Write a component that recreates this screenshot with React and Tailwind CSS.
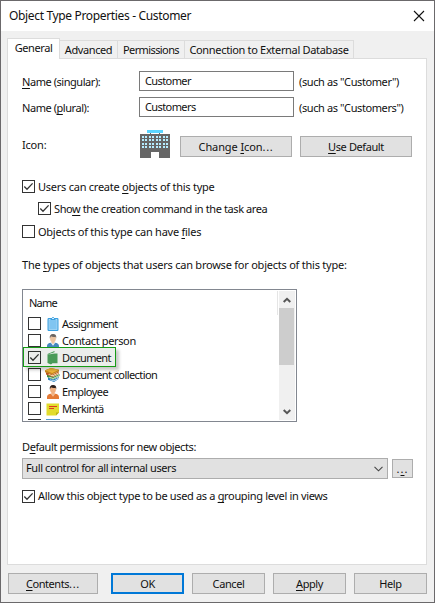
import React from 'react';

const U = ({ children }) => (
  <span className="underline decoration-1 underline-offset-[2px] [text-decoration-skip-ink:none]">{children}</span>
);

const Dots = () => <span className="tracking-[0.7px]">...</span>;

const Box = ({ checked }) => (
  <svg width="13" height="13" viewBox="0 0 13 13" className="block shrink-0">
    <rect x="0.5" y="0.5" width="12" height="12" fill="#fff" stroke="#333" />
    {checked && <path d="M2.3 6.5 5 9.2 10.6 3.4" fill="none" stroke="#333" strokeWidth="1.3" />}
  </svg>
);

const Check = ({ checked, className, text, children }) => (
  <label className={`flex h-[13px] items-center gap-[3px] ${className}`}>
    <Box checked={checked} />
    <span className={`leading-[14px] ${text}`}>{children}</span>
  </label>
);

const Btn = ({ className, border = 'border border-[#adadad]', children }) => (
  <button className={`flex h-[21px] shrink-0 items-center justify-center bg-[#e1e1e1] leading-[19px] ${border} ${className}`}>
    <span>{children}</span>
  </button>
);

const BuildingIcon = () => (
  <svg width="30" height="28" viewBox="0 0 30 28" shapeRendering="crispEdges" className="block shrink-0">
    <rect x="7" width="16" height="3" fill="#5bd5ff" />
    <path d="M10 3h1v1h-1zM19 3h1v1h-1zM0 4h30v24H19v-6h-8v6H0z" fill="#666" />
    {[6, 9, 13, 16].map((y) =>
      [2, 5, 9, 12, 16, 19, 23, 26].map((x) => (
        <rect key={`${x}-${y}`} x={x} y={y} width="2" height="2" fill="#b5ecff" />
      ))
    )}
  </svg>
);

const Clipboard = () => (
  <svg width="14" height="14" viewBox="0 0 14 14" className="block">
    <rect x="2.1" y="1.6" width="9.8" height="11.800" rx="0.6" fill="#d8effc" stroke="#3a9fe0" strokeWidth="1.2" />
    <rect x="3.2" y="3" width="7.6" height="9.400" fill="#80c5f1" />
    <path d="M4.5 3V1.2h1.4C6 .4 6.4 0 7 0s1 .4 1.1 1.2h1.4V3z" fill="#3a9fe0" />
    <rect x="6" y="1" width="2" height="1" fill="#d8effc" />
  </svg>
);

const Person = ({ hair, skin, shirt, collar }) => (
  <svg width="14" height="14" viewBox="0 0 14 14" className="block">
    <path d="M1 14v-2c0-2 1.500-3 4-3.300h4c2.500.3 4 1.300 4 3.300v2z" fill={shirt} />
    <path d="M4.600 8.600 7 11.800l2.400-3.200z" fill={collar} />
    <path d="M5.500 6h3v2.700L7 10 5.500 8.700z" fill={skin} />
    <ellipse cx="7" cy="4.400" rx="2.900" ry="3.500" fill={skin} />
    <path d="M3.800 4.500C3.400 1.500 4.500 0 7 0s3.700 1.300 3.200 4.500L9.500 2.800C8 3.200 6 3 5 2.300z" fill={hair} />
  </svg>
);

const Book = () => (
  <svg width="14" height="14" viewBox="0 0 14 14" className="block">
    <path d="M1.500 3 8.500 0v1.700L3 3.300z" fill="#50a55f" />
    <path d="M2.600 3.300 9 1v1.500z" fill="#f1f8f2" />
    <path d="M1.500 3.300H4L9 2.400h2.500v9.900H6.500L5 13.500 1.500 12z" fill="#50a55f" />
  </svg>
);

const Books = () => (
  <svg width="15" height="14" viewBox="0 0 15 14" className="-ml-px block">
    <path d="M3 9.500v2.300L9 14l5-3.200V9l-6 2.500z" fill="#287fc1" />
    <path d="m5 11.500 4 1 5-3v1L9 13.300 5 12z" fill="#e5f1f5" />
    <path d="M2 6.500v2.600l6 2.400L14.500 8V6L8 9z" fill="#3e8b3e" />
    <path d="m4 8.800 4.200 1.200 6-3v.7L8.200 10.900 4 9.500z" fill="#dcefd0" />
    <path d="M1 4v2.500L7.500 9 14 5.500V3.300L7.500 6.500z" fill="#b8501c" />
    <path d="m3.500 6 4.200 1.300L14 4.200v.7L7.700 8.300 3.500 6.800z" fill="#fff2be" />
    <path d="m0 2.200 6-2.200 8 1.700v1.600L7 6.500 0 4.300z" fill="#c8861c" />
    <path d="m0 2.200 6-2.200 8 1.700L7.200 4.900z" fill="#f3b93a" />
  </svg>
);

const Note = () => (
  <svg width="14" height="14" viewBox="0 0 14 14" className="block">
    <path d="M.5 1.500h12.500V10.500L10 13.500H.5z" fill="#e2dc2d" />
    <path d="M13 10.500h-3v3z" fill="#b8b018" />
    <path d="M3 4.500h8M3 6.500h5" stroke="#df3a20" strokeWidth="1" />
  </svg>
);

const BlueItem = () => (
  <svg width="14" height="14" viewBox="0 0 14 14" className="block">
    <rect x="0" y="0" width="14" height="13" fill="#4f9bd0" />
  </svg>
);

const rows = [
  { name: 'Assignment', icon: <Clipboard />, t: 'tracking-[-0.55px]' },
  { name: 'Contact person', icon: <Person hair="#6b6460" skin="#ecc3a0" shirt="#4587bd" collar="#e9f3fa" />, t: 'tracking-[-0.36px]' },
  { name: 'Document', icon: <Book />, checked: true, t: 'tracking-[-0.65px]' },
  { name: 'Document collection', icon: <Books />, t: 'tracking-[-0.58px]' },
  { name: 'Employee', icon: <Person hair="#2e211d" skin="#f0b080" shirt="#e47a35" collar="#f5c199" />, t: 'tracking-[-0.55px]' },
  { name: 'Merkintä', icon: <Note />, t: 'tracking-[-0.6px]' },
  { name: '', icon: <BlueItem />, t: '' },
];

const Chevron = ({ down }) => (
  <svg width="8" height="6" viewBox="0 0 8 6" className="block">
    <path d={down ? 'M.7 1 4 4.200 7.300 1' : 'M.7 5 4 1.800 7.300 5'} fill="none" stroke="#555" strokeWidth="2" />
  </svg>
);

export default function App() {
  return (
    <div className="flex h-[603px] w-[435px] flex-col overflow-hidden border border-[#6b696b] bg-[#f0f0f0] font-['Noto_Sans',sans-serif] text-[11px] tracking-[-0.4px] whitespace-nowrap text-[#111]">
      <header className="flex h-[30px] shrink-0 items-center justify-between bg-white pr-[9px] pl-[8px]">
        <h1 className="text-[12px] leading-[30px] tracking-[-0.34px]">Object Type Properties - Customer</h1>
        <svg width="12" height="12" viewBox="0 0 12 12">
          <path d="m1 1 10 10M11 1 1 11" stroke="#111" strokeWidth="1.100" />
        </svg>
      </header>

      <nav className="mt-[7px] ml-[6px] flex h-[20px] shrink-0 items-end leading-[18px]">
        <div className="z-10 -mb-px flex h-[21px] w-[53px] shrink-0 justify-center border border-b-0 border-[#dcdcdc] bg-white">General</div>
        <div className="flex h-[18px] w-[58px] shrink-0 justify-center border-t border-r border-[#dcdcdc]">Advanced</div>
        <div className="flex h-[18px] w-[67px] shrink-0 justify-center border-t border-r border-[#dcdcdc] tracking-[-0.6px]">Permissions</div>
        <div className="flex h-[18px] w-[169px] shrink-0 justify-center border-t border-r border-[#dcdcdc] tracking-[-0.33px]">Connection to External Database</div>
      </nav>

      <main className="ml-[6px] flex h-[507px] w-[420px] shrink-0 flex-col border border-[#dcdcdc] bg-white pt-[12px] pl-[14px]">
        <div className="flex h-[20px] shrink-0">
          <span className="w-[117px] leading-[22px] tracking-[-0.45px]"><U>N</U>ame (singular):</span>
          <div className="w-[155px] border border-[#7a7a7a] pl-[5px] leading-[18px] tracking-[-0.6px]">Customer</div>
          <span className="ml-[5px] leading-[22px]">(such as "Customer")</span>
        </div>
        <div className="mt-[6px] flex h-[20px] shrink-0">
          <span className="w-[117px] leading-[22px] tracking-[-0.45px]">Name (<U>p</U>lural):</span>
          <div className="w-[155px] border border-[#7a7a7a] pl-[5px] leading-[18px] tracking-[-0.6px]">Customers</div>
          <span className="ml-[5px] leading-[22px]">(such as "Customers")</span>
        </div>

        <div className="mt-[13px] flex h-[28px] shrink-0">
          <span className="w-[118px] leading-[30px] tracking-[-0.2px]">Icon:</span>
          <BuildingIcon />
          <div className="mt-[6px] ml-[10px] flex gap-[8px]">
            <Btn className="w-[112px] tracking-[-0.1px]">Change <U>I</U>con<Dots /></Btn>
            <Btn className="w-[112px]"><U>U</U>se Default</Btn>
          </div>
        </div>

        <Check checked className="mt-[22px] shrink-0" text="tracking-[-0.25px]">Users can create <U>o</U>bjects of this type</Check>
        <Check checked className="mt-[9px] ml-[16px] shrink-0" text="tracking-[-0.4px]">Sho<U>w</U> the creation command in the task area</Check>
        <Check className="mt-[10px] shrink-0" text="tracking-[-0.25px]">Objects of this type can have <U>f</U>iles</Check>

        <p className="mt-[19px] h-[16px] shrink-0 leading-[16px] tracking-[-0.23px]">The <U>t</U>ypes of objects that users can browse for objects of this type:</p>

        <div className="relative mt-[16px] flex h-[133px] w-[275px] shrink-0 border border-[#828790] p-px">
          <div className="h-[129px] w-[255px] overflow-hidden">
            <div className="flex h-[24px] items-center border-r border-[#e5e5e5] pl-[5px] tracking-[-0.75px]">Name</div>
            {rows.map((r, i) => (
              <div key={i} className="flex h-[17px] items-center pl-[4px]">
                <Box checked={r.checked} />
                <span className="ml-[5px] w-[16px]">{r.icon}</span>
                <span className={`leading-[17px] ${r.t}`}>{r.name}</span>
              </div>
            ))}
          </div>
          <div className="ml-px flex w-[16px] flex-col items-center bg-[#f0f0f0]">
            <div className="flex h-[17px] items-center"><Chevron /></div>
            <div className="h-[57px] w-[15px] self-start bg-[#cdcdcd]" />
            <div className="mt-auto flex h-[17px] items-center"><Chevron down /></div>
          </div>
          <div className="absolute top-[57px] left-0 h-[20px] w-[93px] border border-[#169b16] bg-[#002000]/8 shadow-[3px_3px_3px_rgba(0,0,0,0.22)]" />
        </div>

        <p className="mt-[17px] h-[16px] shrink-0 leading-[16px]">D<U>e</U>fault permissions for new objects:</p>
        <div className="mt-[3px] flex h-[21px] shrink-0 items-center">
          <div className="flex h-[21px] w-[366px] items-center justify-between border border-[#adadad] bg-[#e1e1e1] pr-[4px] pl-[3px]">
            <span className="leading-[17px] pb-[2px]">Full control for all internal users</span>
            <svg width="9" height="6" viewBox="0 0 9 6"><path d="m.5.8 4 4 4-4" fill="none" stroke="#444" strokeWidth="1.100" /></svg>
          </div>
          <button className="ml-[4px] flex h-[19px] w-[21px] items-center justify-center border border-[#adadad] bg-[#e1e1e1] leading-[17px] tracking-[1px]"><span>.<U>.</U>.</span></button>
        </div>
        <Check checked className="mt-[11px] shrink-0" text="tracking-[-0.34px] pb-[2px]">Allow this object type to be used as a <U>g</U>rouping level in views</Check>
      </main>

      <footer className="mt-[8px] ml-[7px] flex gap-[8px]">
        <Btn className="mr-[5px] w-[90px] tracking-[-0.45px]"><U>C</U>ontents<Dots /></Btn>
        <Btn className="w-[73px]" border="border-2 border-[#0078d7]">OK</Btn>
        <Btn className="w-[73px]">Cancel</Btn>
        <Btn className="w-[73px]"><U>A</U>pply</Btn>
        <Btn className="w-[73px]">Help</Btn>
      </footer>
    </div>
  );
}
